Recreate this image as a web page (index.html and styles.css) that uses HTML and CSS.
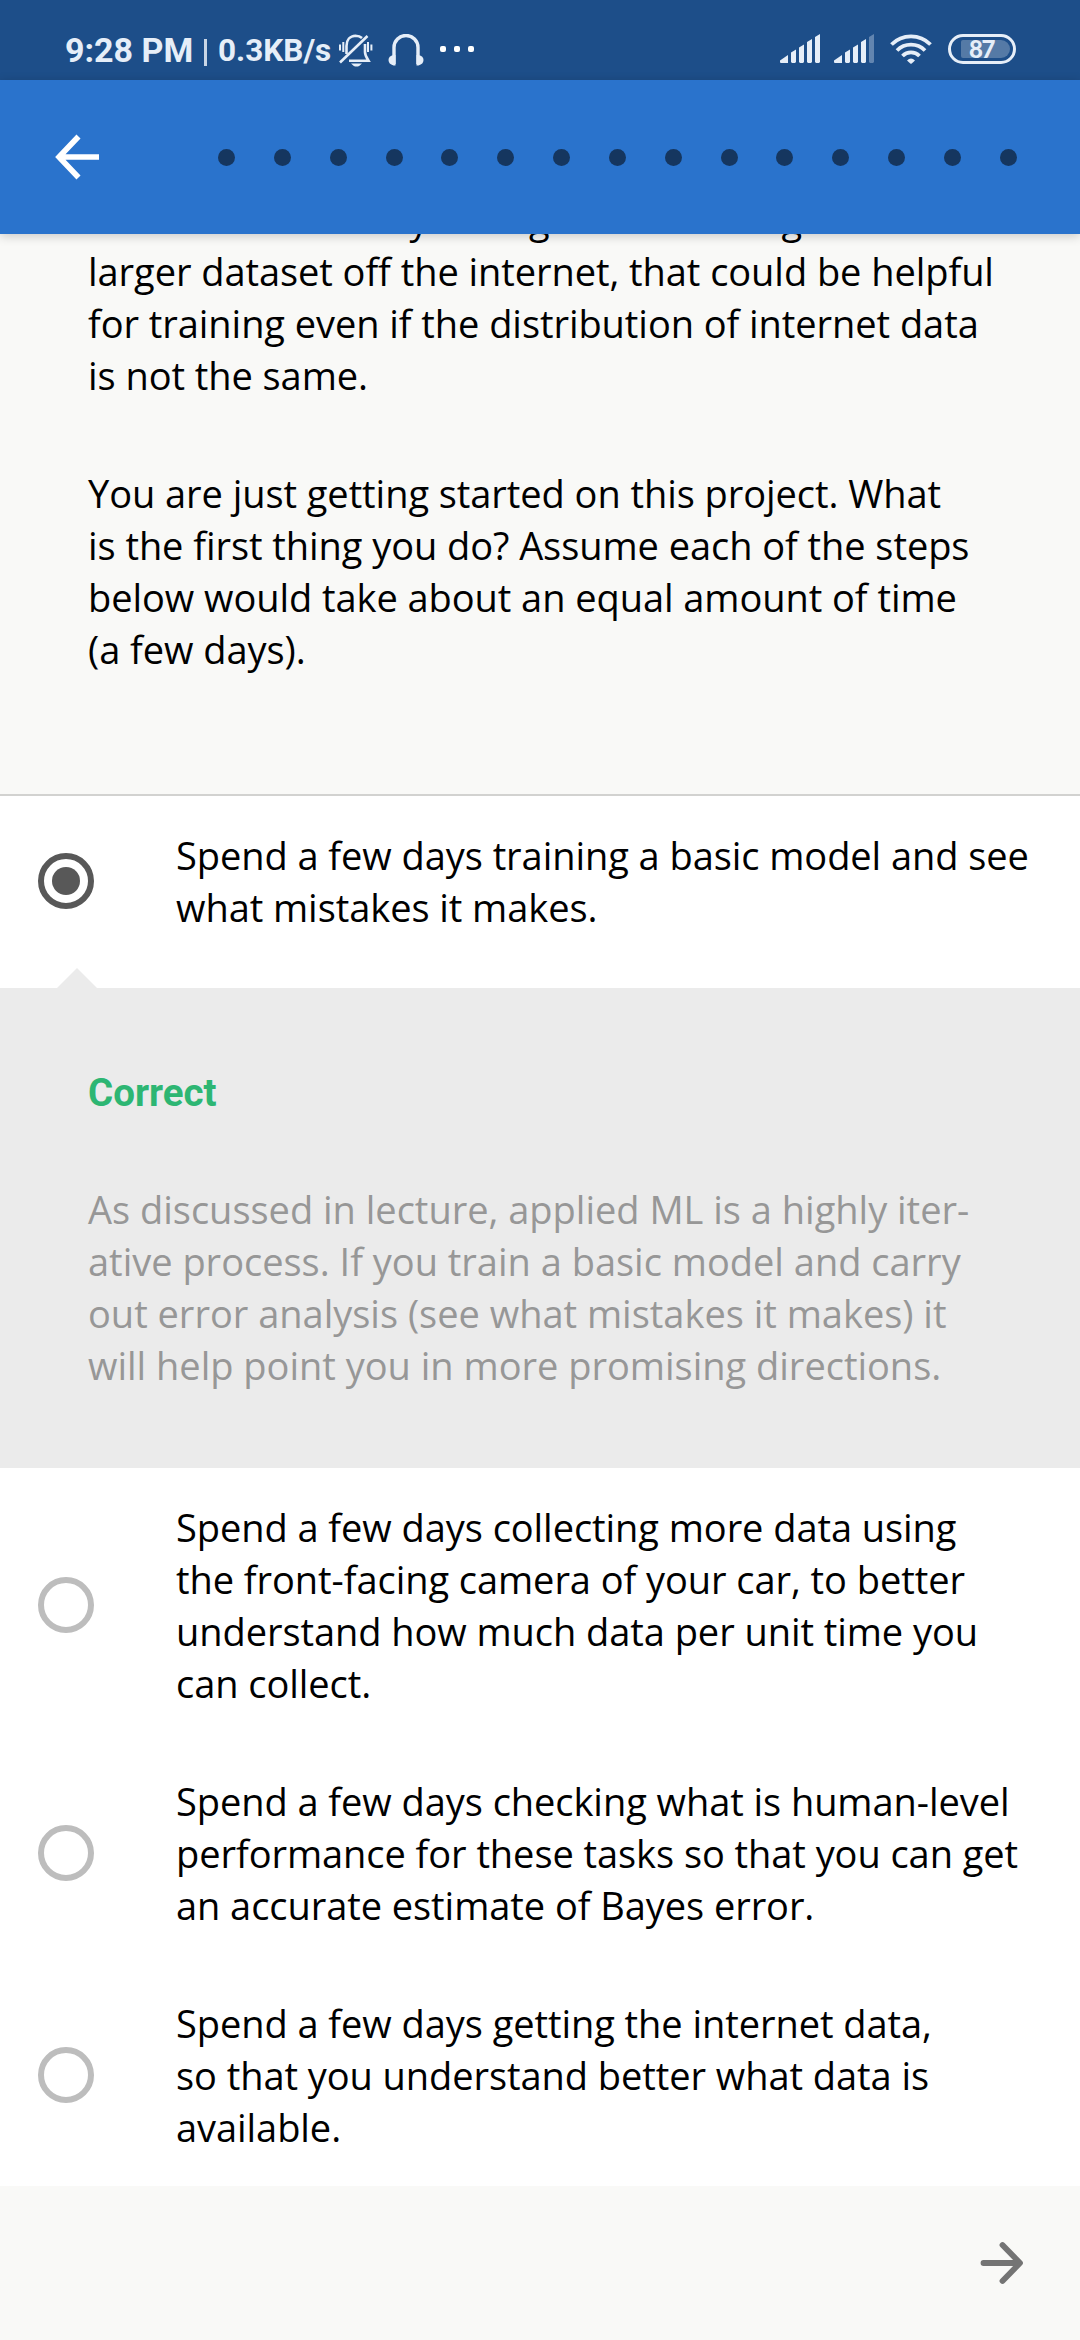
FILE: index.html
```html
<!DOCTYPE html>
<html lang="en">
<head>
<meta charset="utf-8">
<title>Quiz</title>
<link rel="stylesheet" href="styles.css">
</head>
<body>
<div class="statusbar">
  <span class="clock">9:28 PM</span>
  <span class="pipe"></span>
  <span class="rate">0.3KB/s</span>
  <svg class="bell" width="36" height="34" viewBox="0 0 36 34" fill="none" stroke="#e6eef8" stroke-width="2.6">
    <path d="M8.5 20V12C8.5 6 12 2 17.500 1.800C20.500 1.800 22.500 2.600 24 4M27 10V18C27 21.500 28.500 23.500 30.500 26.700H11"/>
    <path d="M2 28.500L29.500 2"/>
    <path d="M13 29.500H24L21.500 31.700Q18.500 33.500 15.500 31.700Z" fill="#e6eef8" stroke="none"/>
    <path d="M2 10.500V16.500M5.300 8V18M30 8V18M33.400 10.500V16.500" stroke-width="2"/>
  </svg>
  <svg class="phones" width="36" height="34" viewBox="0 0 36 34">
    <path d="M6 30V13.500A12 12 0 0 1 30 13.500V30" fill="none" stroke="#e6eef8" stroke-width="3.400"/>
    <path d="M7.500 21V31.500H5.500Q.5 30 .5 26T5.500 21ZM28.500 21V31.500H30.500Q35.500 30 35.500 26T30.500 21Z" fill="#e6eef8"/>
  </svg>
  <span class="more"><i></i><i></i><i></i></span>
  <span class="spacer"></span>
  <svg class="signal" width="40" height="30" viewBox="0 0 40 30" fill="#e6eef8">
    <path d="M0 26.500L8 21V29H1Q0 29 0 28ZM11 18.500L16 15.500V28L15 29H12L11 28ZM19 13.500L24 10.500V28L23 29H20L19 28ZM27 8L32 5V28L31 29H28L27 28ZM35 3L40 0V28L39 29H36L35 28Z"/>
  </svg>
  <svg class="signal two" width="40" height="30" viewBox="0 0 40 30" fill="#e6eef8">
    <path d="M0 26.500L8 21V29H1Q0 29 0 28ZM11 18.500L16 15.500V28L15 29H12L11 28ZM19 13.500L24 10.500V28L23 29H20L19 28ZM27 8L32 5V28L31 29H28L27 28Z"/>
    <path d="M35 3L40 0V28L39 29H36L35 28Z" opacity=".35"/>
  </svg>
  <svg class="wifi" width="42" height="30" viewBox="0 0 42 30" fill="none" stroke="#e6eef8" stroke-width="3.800">
    <path d="M1.500 10.500A27.500 27.500 0 0 1 40.500 10.500"/>
    <path d="M7 16.500A19.800 19.800 0 0 1 35 16.500"/>
    <path d="M12.500 22A12 12 0 0 1 29.500 22"/>
    <path d="M17 26.500Q21 22.300 25 26.500L21.700 29.600Q21 30 20.300 29.600Z" fill="#e6eef8" stroke="none"/>
  </svg>
  <span class="battery"><span class="level">87</span></span>
</div>

<header class="appbar">
  <svg width="44" height="46" viewBox="0 0 44 46" fill="none" stroke="#fff" stroke-width="5.600">
    <path d="M23.500 2.500L4 23L23.500 43.500M3.500 23H44"/>
  </svg>
  <div class="steps"><i></i><i></i><i></i><i></i><i></i><i></i><i></i><i></i><i></i><i></i><i></i><i></i><i></i><i></i><i></i></div>
</header>

<main>
  <section class="question">
    <p>well on. You think you might be able to get a much<br>larger dataset off the internet, that could be helpful<br>for training even if the distribution of internet data<br>is not the same.</p>
    <p>You are just getting started on this project. What<br>is the first thing you do? Assume each of the steps<br>below would take about an equal amount of time<br>(a few days).</p>
  </section>

  <section class="option first">
    <span class="radio checked"></span>
    <p>Spend a few days training a basic model and see<br>what mistakes it makes.</p>
  </section>
  <section class="feedback">
    <h2>Correct</h2>
    <p>As discussed in lecture, applied ML is a highly iter-<br>ative process. If you train a basic model and carry<br>out error analysis (see what mistakes it makes) it<br>will help point you in more promising directions.</p>
  </section>
  <section class="option">
    <span class="radio"></span>
    <p>Spend a few days collecting more data using<br>the front-facing camera of your car, to better<br>understand how much data per unit time you<br>can collect.</p>
  </section>
  <section class="option">
    <span class="radio"></span>
    <p>Spend a few days checking what is human-level<br>performance for these tasks so that you can get<br>an accurate estimate of Bayes error.</p>
  </section>
  <section class="option">
    <span class="radio"></span>
    <p>Spend a few days getting the internet data,<br>so that you understand better what data is<br>available.</p>
  </section>
</main>

<footer class="footer">
  <svg width="44" height="44" viewBox="0 0 44 44" fill="none" stroke="#747474" stroke-width="5.800" stroke-linecap="round" stroke-linejoin="round">
    <path d="M3.500 22H39M22.500 4L40 22L22.500 40"/>
  </svg>
</footer>
</body>
</html>
```
FILE: styles.css
```css
* { box-sizing: border-box; }
body {
  margin: 0;
  width: 1080px;
  height: 2340px;
  overflow: hidden;
  display: flex;
  flex-direction: column;
  background: #f9f9f7;
  color: #000;
  font: 38px/52px "Open Sans", "Noto Sans", sans-serif;
}
p, h2 { margin: 0; white-space: nowrap; }
p { letter-spacing: -.06px; }

.statusbar {
  height: 80px;
  flex: none;
  display: flex;
  align-items: flex-start;
  padding: 34px 64px 0 65px;
  background: #1d4e89;
  color: #e6eef8;
  font-family: Roboto, sans-serif;
  font-weight: 700;
  line-height: 32px;
  white-space: nowrap;
}
.clock { width: 139px; font-size: 34px; }
.pipe { width: 3px; height: 27px; margin: 5px 11px 0 0; background: #c9d6e6; }
.rate { width: 120px; font-size: 31.5px; line-height: 34px; }
.bell { margin-right: 14px; }
.phones { margin-right: 16px; }
.more { display: flex; gap: 8px; margin-top: 12px; }
.more i { width: 6px; height: 6px; border-radius: 2px; background: #fff; }
.spacer { flex: 1; }
.signal { margin-right: 14px; }
.signal.two { margin-right: 16px; }
.wifi { margin-right: 16px; }
.battery {
  width: 68px;
  height: 30px;
  padding: 3px;
  border: 3px solid #e6eef8;
  border-radius: 15px;
}
.level {
  display: block;
  width: 49px;
  height: 18px;
  margin-left: 7px;
  padding-left: 8px;
  border-radius: 2px 9px 9px 2px;
  background: #557aa6;
  font: 900 24px/18px Lato, sans-serif;
  letter-spacing: -1.5px;
}

.appbar {
  position: relative;
  z-index: 1;
  height: 154px;
  flex: none;
  display: flex;
  align-items: center;
  padding: 0 63px 0 55px;
  background: #2a73cc;
  box-shadow: 0 2px 10px rgba(0, 0, 0, .2);
}
.steps { flex: 1; display: flex; justify-content: space-between; margin-left: 119px; }
.steps i { width: 17px; height: 17px; border-radius: 50%; background: #15365f; }

main { flex: none; }
.question {
  height: 603px;
  margin-top: -41px;
  padding-left: 88px;
  border-bottom: 2px solid #d2d2d0;
}
.question p + p { margin-top: 66px; }

.option {
  display: flex;
  align-items: center;
  padding: 33px 0 33px 38px;
  background: #fff;
}
.option.first { height: 192px; padding-bottom: 55px; }
.radio {
  display: grid;
  place-items: center;
  width: 56px;
  height: 56px;
  flex: none;
  margin-right: 82px;
  border: 6px solid #bdbdbd;
  border-radius: 50%;
}
.radio.checked { border-color: #585858; }
.radio.checked::after {
  content: "";
  width: 28px;
  height: 28px;
  border-radius: 50%;
  background: #585858;
}

.feedback {
  position: relative;
  height: 480px;
  padding: 79px 0 0 88px;
  background: #ebebeb;
  color: #979797;
}
.feedback p { letter-spacing: -.01px; }
.feedback::before {
  content: "";
  position: absolute;
  left: 57px;
  top: -20px;
  border: solid transparent;
  border-width: 0 20px 20px;
  border-bottom-color: #ebebeb;
}
.feedback h2 {
  margin-bottom: 64px;
  color: #2db673;
  font: 700 38.5px/52px Roboto, sans-serif;
}

.footer {
  flex: 1;
  display: flex;
  justify-content: flex-end;
  align-items: center;
  padding-right: 56px;
}
```
